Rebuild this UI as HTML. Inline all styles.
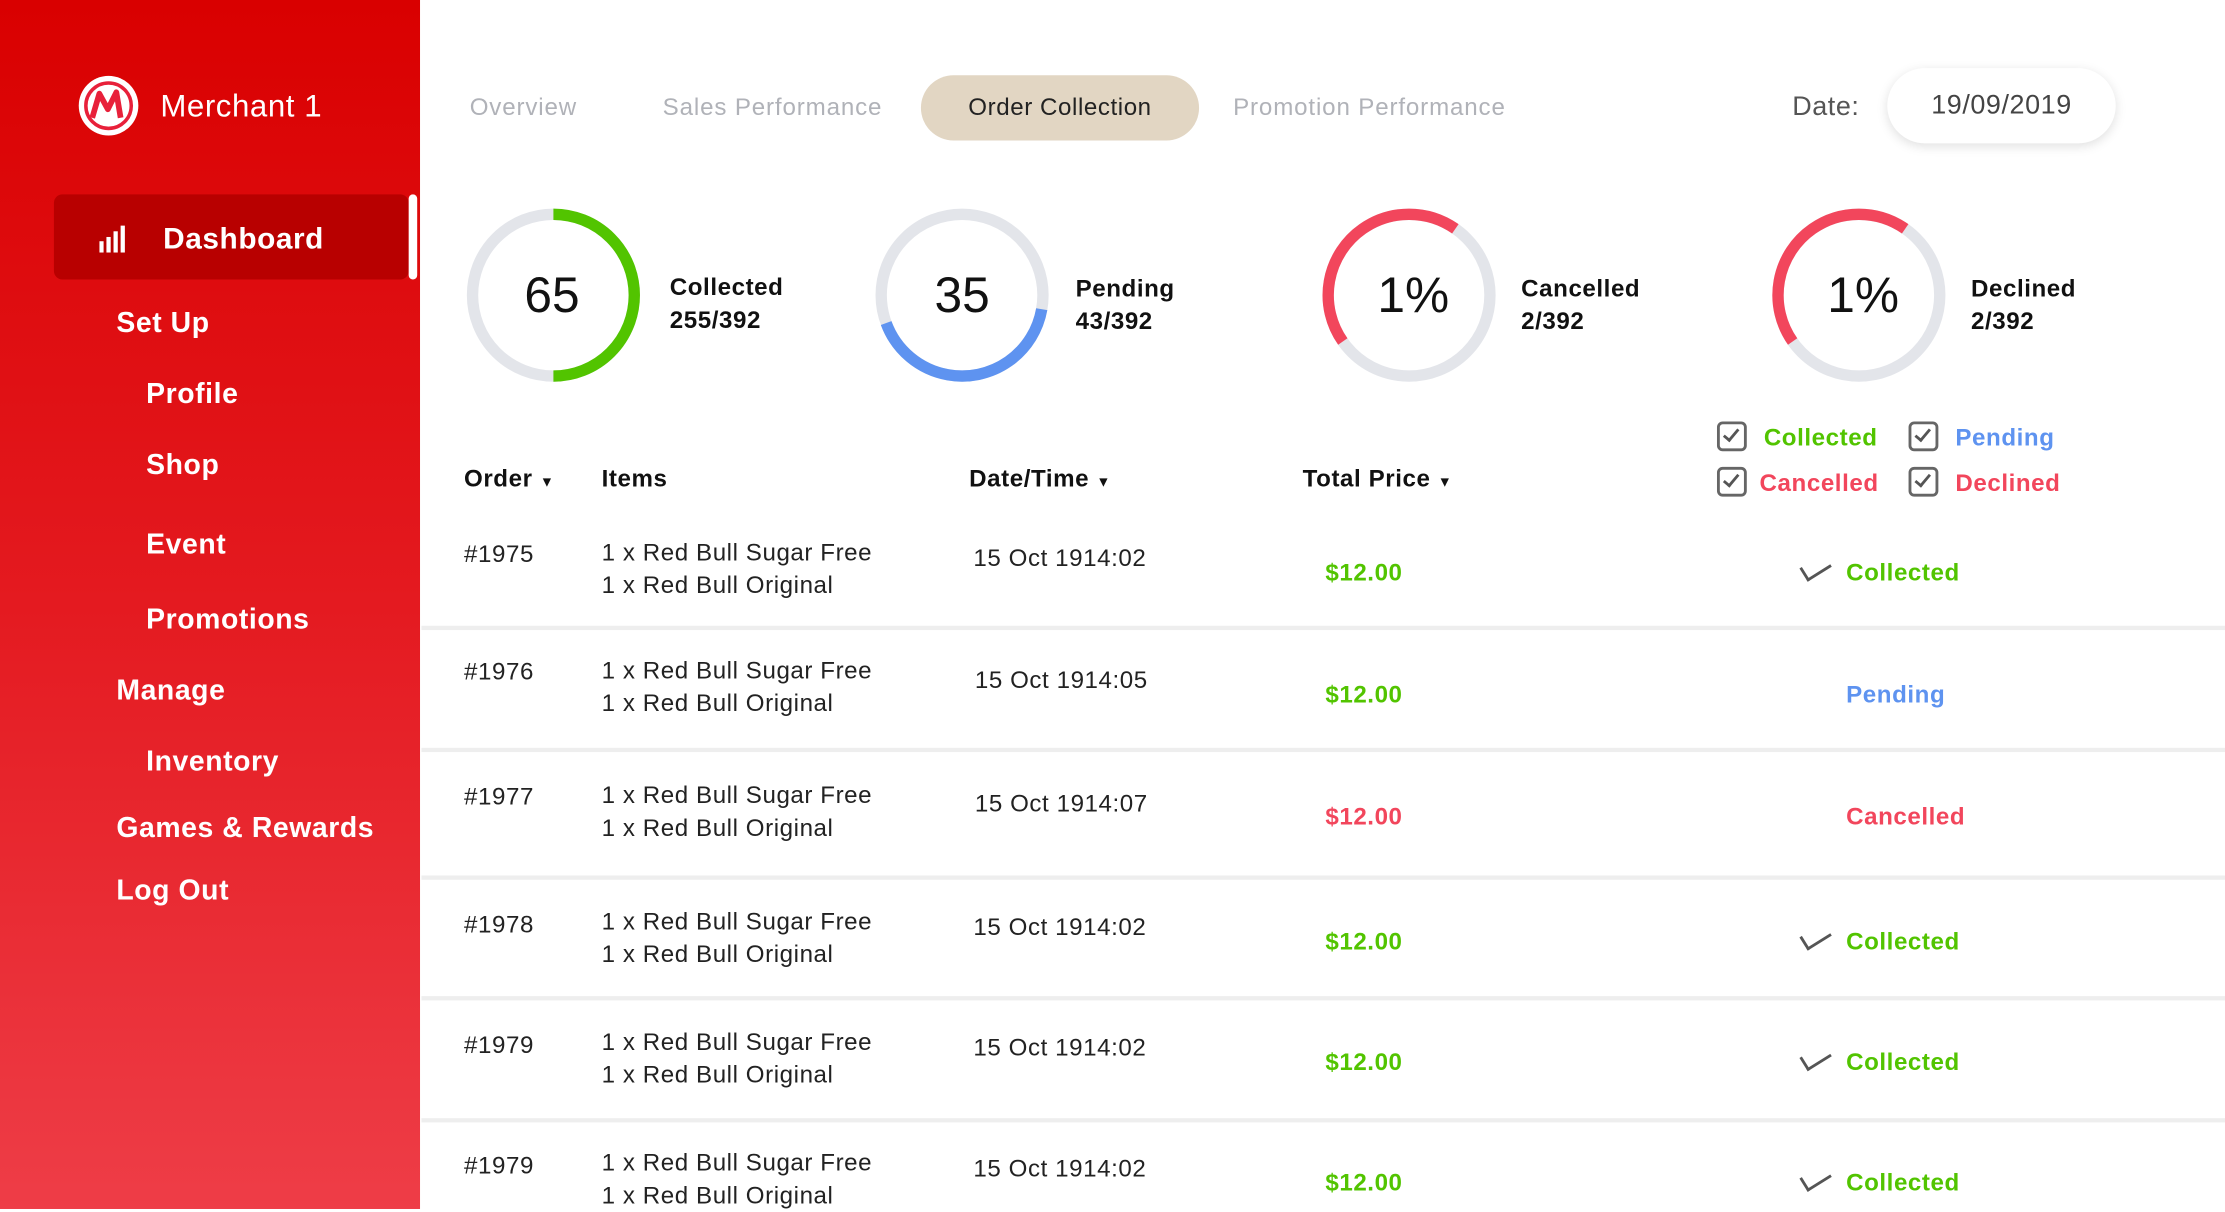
<!DOCTYPE html>
<html><head><meta charset="utf-8"><style>
html,body{margin:0;padding:0;width:2225px;height:1209px;overflow:hidden;background:#fff;}
#w{position:absolute;left:0;top:0;width:1568px;height:852px;transform:scale(1.419);transform-origin:0 0;font-family:"Liberation Sans",Arial,sans-serif;letter-spacing:0.4px;}
.a{position:absolute;white-space:nowrap;}
#sb{position:absolute;left:0;top:0;width:296px;height:852px;background:linear-gradient(180deg,#d90000 0%,#e41a20 50%,#ee3d47 100%);}
.n{position:absolute;color:#fff;font-weight:bold;font-size:20px;line-height:24px;}
.tab{position:absolute;font-size:17px;line-height:20px;color:#b0b2b8;top:66px;letter-spacing:0.6px;}
.lb{font-weight:bold;font-size:17px;line-height:23px;color:#111;}
.big{position:absolute;font-size:35px;line-height:40px;color:#111;width:120px;text-align:center;letter-spacing:0;}
.h{position:absolute;top:328px;font-weight:bold;font-size:17px;line-height:20px;color:#111;}
.t{position:absolute;font-size:17px;line-height:23px;color:#222;}
.p{position:absolute;font-weight:bold;font-size:17px;line-height:20px;left:934px;}
.s{position:absolute;font-weight:bold;font-size:17px;line-height:20px;}
.sep{position:absolute;left:297px;width:1271px;height:3px;background:#eeeeee;}
.cb{position:absolute;width:17px;height:17px;border:2.5px solid #666;border-radius:4px;}
.cb:after{content:"";position:absolute;left:5px;top:1px;width:4px;height:9px;border-right:2px solid #555;border-bottom:2px solid #555;transform:rotate(40deg);}
.ck{position:absolute;width:9px;height:18px;border-right:2.5px solid #555;border-bottom:2.5px solid #555;transform:rotate(58deg);}
</style></head><body><div id="w">
<div id="sb"></div>
<svg class="a" style="left:55px;top:53px" width="43" height="43" viewBox="0 0 43 43"><circle cx="21.5" cy="21.5" r="21" fill="#fff"/><circle cx="21.5" cy="21.5" r="16" fill="none" stroke="#e8203a" stroke-width="2.5"/><path d="M10 30 L15 13 L21 24 L27 12 L30 30" fill="none" stroke="#e8203a" stroke-width="4" stroke-linejoin="round"/></svg>
<div class="a" style="left:113px;top:62px;color:#fff;font-size:22px;line-height:26px">Merchant 1</div>
<div class="a" style="left:38px;top:137px;width:250px;height:60px;background:#b80000;border-radius:6px"></div>
<div class="a" style="left:288px;top:137px;width:6px;height:60px;background:#fff;border-radius:3px"></div>
<svg class="a" style="left:70px;top:158px" width="20" height="20"><rect x="0" y="12" width="3" height="8" fill="#fff"/><rect x="5" y="9" width="3" height="11" fill="#fff"/><rect x="10" y="5" width="3" height="15" fill="#fff"/><rect x="15" y="1" width="3" height="19" fill="#fff"/></svg>
<div class="n" style="left:115px;top:157px;font-size:21px">Dashboard</div>
<div class="n" style="left:82px;top:216px">Set Up</div>
<div class="n" style="left:103px;top:266px">Profile</div>
<div class="n" style="left:103px;top:316px">Shop</div>
<div class="n" style="left:103px;top:372px">Event</div>
<div class="n" style="left:103px;top:425px">Promotions</div>
<div class="n" style="left:82px;top:475px">Manage</div>
<div class="n" style="left:103px;top:525px">Inventory</div>
<div class="n" style="left:82px;top:572px">Games &amp; Rewards</div>
<div class="n" style="left:82px;top:616px">Log Out</div>

<div class="tab" style="left:331px">Overview</div>
<div class="tab" style="left:467px">Sales Performance</div>
<div class="a" style="left:649px;top:53px;width:196px;height:46px;border-radius:23px;background:#e2d6c3;color:#222;font-size:17px;line-height:46px;text-align:center">Order Collection</div>
<div class="tab" style="left:869px">Promotion Performance</div>
<div class="a" style="left:1263px;top:65px;font-size:19px;line-height:22px;color:#555">Date:</div>
<div class="a" style="left:1330px;top:48px;width:161px;height:53px;border-radius:27px;background:#fff;box-shadow:0 2px 8px rgba(0,0,0,0.13);font-size:19px;line-height:53px;text-align:center;color:#444">19/09/2019</div>

<svg class="a" style="left:0;top:0" width="1568" height="300">
<g fill="none" stroke-width="8">
<circle cx="390" cy="208" r="57" stroke="#e3e5ea"/>
<circle cx="390" cy="208" r="57" stroke="#52c400" stroke-dasharray="179 400" transform="rotate(-90 390 208)"/>
<circle cx="678" cy="208" r="57" stroke="#e3e5ea"/>
<circle cx="678" cy="208" r="57" stroke="#5e93f0" stroke-dasharray="149 400" transform="rotate(10 678 208)"/>
<circle cx="993" cy="208" r="57" stroke="#e3e5ea"/>
<circle cx="993" cy="208" r="57" stroke="#f2465c" stroke-dasharray="159 400" transform="rotate(145 993 208)"/>
<circle cx="1310" cy="208" r="57" stroke="#e3e5ea"/>
<circle cx="1310" cy="208" r="57" stroke="#f2465c" stroke-dasharray="159 400" transform="rotate(145 1310 208)"/>
</g></svg>
<div class="big" style="left:329px;top:189px">65</div>
<div class="big" style="left:618px;top:189px">35</div>
<div class="big" style="left:936px;top:189px">1%</div>
<div class="big" style="left:1253px;top:189px">1%</div>
<div class="a lb" style="left:472px;top:191px">Collected<br>255/392</div>
<div class="a lb" style="left:758px;top:192px">Pending<br>43/392</div>
<div class="a lb" style="left:1072px;top:192px">Cancelled<br>2/392</div>
<div class="a lb" style="left:1389px;top:192px">Declined<br>2/392</div>

<div class="cb" style="left:1210px;top:297px"></div><div class="s" style="left:1243px;top:299px;color:#52c400;font-weight:bold">Collected</div>
<div class="cb" style="left:1345px;top:297px"></div><div class="s" style="left:1378px;top:299px;color:#5e93f0">Pending</div>
<div class="cb" style="left:1210px;top:329px"></div><div class="s" style="left:1240px;top:331px;color:#f2465c">Cancelled</div>
<div class="cb" style="left:1345px;top:329px"></div><div class="s" style="left:1378px;top:331px;color:#f2465c">Declined</div>

<div class="h" style="left:327px">Order <span style="font-size:10px">▼</span></div>
<div class="h" style="left:424px">Items</div>
<div class="h" style="left:683px">Date/Time <span style="font-size:10px">▼</span></div>
<div class="h" style="left:918px">Total Price <span style="font-size:10px">▼</span></div>

<div class="t" style="left:327px;top:379px">#1975</div><div class="t" style="left:424px;top:378px">1 x Red Bull Sugar Free<br>1 x Red Bull Original</div><div class="t" style="left:686px;top:382px">15 Oct 1914:02</div><div class="p" style="top:394px;color:#52c400">$12.00</div><div class="ck" style="left:1274px;top:390px"></div><div class="s" style="left:1301px;top:394px;color:#52c400">Collected</div>
<div class="sep" style="top:441px"></div>
<div class="t" style="left:327px;top:462px">#1976</div><div class="t" style="left:424px;top:461px">1 x Red Bull Sugar Free<br>1 x Red Bull Original</div><div class="t" style="left:687px;top:468px">15 Oct 1914:05</div><div class="p" style="top:480px;color:#52c400">$12.00</div><div class="s" style="left:1301px;top:480px;color:#5e93f0">Pending</div>
<div class="sep" style="top:527px"></div>
<div class="t" style="left:327px;top:550px">#1977</div><div class="t" style="left:424px;top:549px">1 x Red Bull Sugar Free<br>1 x Red Bull Original</div><div class="t" style="left:687px;top:555px">15 Oct 1914:07</div><div class="p" style="top:566px;color:#f2465c">$12.00</div><div class="s" style="left:1301px;top:566px;color:#f2465c">Cancelled</div>
<div class="sep" style="top:617px"></div>
<div class="t" style="left:327px;top:640px">#1978</div><div class="t" style="left:424px;top:638px">1 x Red Bull Sugar Free<br>1 x Red Bull Original</div><div class="t" style="left:686px;top:642px">15 Oct 1914:02</div><div class="p" style="top:654px;color:#52c400">$12.00</div><div class="ck" style="left:1274px;top:650px"></div><div class="s" style="left:1301px;top:654px;color:#52c400">Collected</div>
<div class="sep" style="top:702px"></div>
<div class="t" style="left:327px;top:725px">#1979</div><div class="t" style="left:424px;top:723px">1 x Red Bull Sugar Free<br>1 x Red Bull Original</div><div class="t" style="left:686px;top:727px">15 Oct 1914:02</div><div class="p" style="top:739px;color:#52c400">$12.00</div><div class="ck" style="left:1274px;top:735px"></div><div class="s" style="left:1301px;top:739px;color:#52c400">Collected</div>
<div class="sep" style="top:788px"></div>
<div class="t" style="left:327px;top:810px">#1979</div><div class="t" style="left:424px;top:808px">1 x Red Bull Sugar Free<br>1 x Red Bull Original</div><div class="t" style="left:686px;top:812px">15 Oct 1914:02</div><div class="p" style="top:824px;color:#52c400">$12.00</div><div class="ck" style="left:1274px;top:820px"></div><div class="s" style="left:1301px;top:824px;color:#52c400">Collected</div>
</div></body></html>
